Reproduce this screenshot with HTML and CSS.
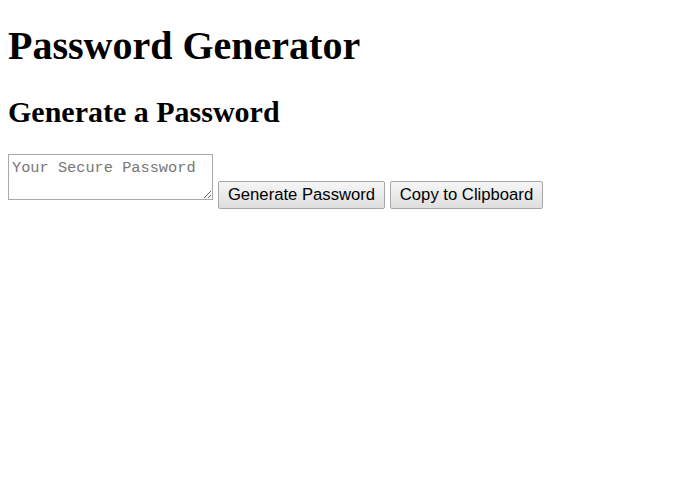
FILE: index.html
```html
<!DOCTYPE html>
<html>
<head>
<meta charset="utf-8">
<title>Password Generator</title>
<link rel="stylesheet" href="styles.css">
</head>
<body>
<h1 class="title">Password Generator</h1>
<h2 class="subtitle">Generate a Password</h2>
<div class="controls">
<textarea class="output" placeholder="Your Secure Password"></textarea>
<button class="btn">Generate Password</button>
<button class="btn">Copy to Clipboard</button>
</div>
</body>
</html>
```
FILE: styles.css
```css
body {
  margin: 8px;
  font-family: "Liberation Serif", serif;
  background: #fff;
  color: #000;
}
.title {
  font-size: 40px;
  line-height: 46px;
  margin: 14.5px 0 26.4px;
  font-weight: bold;
}
.subtitle {
  font-size: 30px;
  line-height: 34px;
  margin: 0 0 25px;
  font-weight: bold;
}
.controls {
  font-size: 16px;
}
.output {
  box-sizing: border-box;
  width: 205px;
  height: 46px;
  margin: 0;
  padding: 4px 3px 2px;
  border: 1px solid #a9a9a9;
  font-family: "Liberation Mono", monospace;
  font-size: 15.3px;
  vertical-align: baseline;
}
.output::placeholder {
  color: #777;
}
.btn {
  box-sizing: border-box;
  width: 167px;
  height: 28px;
  margin: 0 0 0 1px;
  padding: 1px 0;
  border: 1px solid #a7a7a7;
  border-radius: 2px;
  background: linear-gradient(#f6f6f6, #dedede);
  font-family: "Liberation Sans", Arial, sans-serif;
  font-size: 16.67px;
  color: #000;
}
.btn + .btn {
  width: 153px;
}
```
